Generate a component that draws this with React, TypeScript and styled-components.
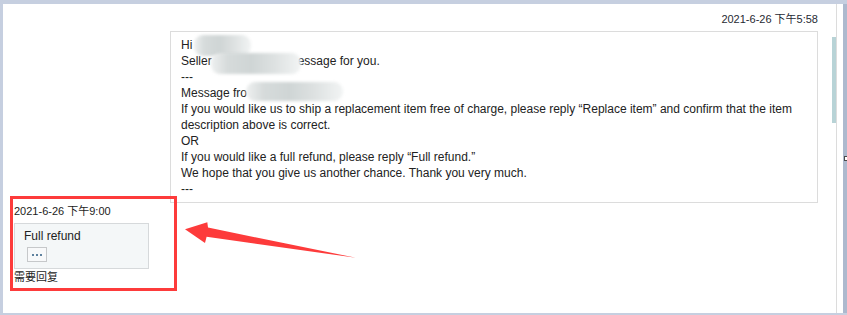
import styled, { createGlobalStyle } from "styled-components";

const GlobalStyle = createGlobalStyle`
  html, body {
    margin: 0;
    padding: 0;
    background: #c6cfe0;
  }
  body {
    font-family: "Liberation Sans", Arial, "Noto Sans CJK SC", sans-serif;
    color: #222;
  }
`;

const messageLines = [
  "---",
  "If you would like us to ship a replacement item free of charge, please reply \u201cReplace item\u201d and confirm that the item",
  "description above is correct.",
  "OR",
  "If you would like a full refund, please reply \u201cFull refund.\u201d",
  "We hope that you give us another chance. Thank you very much.",
  "---",
];

// blurred masks over personal info, in card coordinates
const blurs = [
  { left: 23, top: 3, width: 57, height: 21 },
  { left: 40, top: 21, width: 90, height: 21 },
  { left: 75, top: 50, width: 97, height: 19 },
];

export default function App() {
  return (
    <>
      <GlobalStyle />
      <Frame>
        <Panel>
          <Content>
            <SentTime>2021-6-26 下午5:58</SentTime>
            <MessageCard>
              <Line>Hi</Line>
              <Line>
                Seller<Gap $w={86} />essage for you.
              </Line>
              <Line>---</Line>
              <Line>Message fro</Line>
              {messageLines.slice(1).map((text, i) => (
                <Line key={i}>{text}</Line>
              ))}
              {blurs.map((b, i) => (
                <Blur
                  key={i}
                  style={{ left: b.left, top: b.top, width: b.width, height: b.height }}
                />
              ))}
            </MessageCard>
            <Reply>
              <ReplyTime>2021-6-26 下午9:00</ReplyTime>
              <ReplyBox>
                <ReplyText>Full refund</ReplyText>
                <MoreButton>
                  <Dot />
                  <Dot />
                  <Dot />
                </MoreButton>
              </ReplyBox>
              <NeedReply>需要回复</NeedReply>
              <RedFrame />
              <Arrow viewBox="183 219 176 42" width="176" height="42">
                <polygon
                  points="185,229.3 207.3,222.3 208,227.6 356,257.8 206.6,236.8 205,242.9"
                  fill="#fd3b3b"
                />
              </Arrow>
            </Reply>
          </Content>
          <ScrollTrack>
            <ScrollThumb />
          </ScrollTrack>
          <Divider />
          <Spacer />
        </Panel>
        <RightBand>
          <Handle />
        </RightBand>
      </Frame>
    </>
  );
}

const Frame = styled.div`
  display: flex;
  width: 847px;
  height: 315px;
  box-sizing: border-box;
  padding: 4px 0 2px 3px;
  background: #c6cfe0;
`;

const Panel = styled.div`
  display: flex;
  flex: 1;
  background: #fff;
`;

const Content = styled.div`
  flex: 1;
  display: flex;
  flex-direction: column;
  padding: 7px 14px 0 11px;
  font-size: 12px;
  line-height: 16px;
`;

const SentTime = styled.div`
  align-self: flex-end;
  font-size: 11px;
  line-height: 16px;
  color: #1f2a33;
`;

const MessageCard = styled.div`
  position: relative;
  margin: 4px 0 0 156px;
  padding: 5px 9px 5px 10px;
  border: 1px solid #dcdcdc;
  overflow: hidden;
`;

const Line = styled.div`
  white-space: nowrap;
  height: 16px;
`;

const Gap = styled.span<{ $w: number }>`
  display: inline-block;
  width: ${({ $w }) => $w}px;
`;

const Blur = styled.span`
  position: absolute;
  border-radius: 9px;
  background: linear-gradient(
    90deg,
    #eef0f0 0%,
    #d6dbdb 18%,
    #cfd5d5 45%,
    #dde1e1 70%,
    #f2f4f4 100%
  );
  filter: blur(1.5px);
`;

const Reply = styled.div`
  position: relative;
  width: 135px;
  margin-top: 0;
`;

const ReplyTime = styled.div`
  font-size: 11px;
  line-height: 16px;
  color: #1c1c1c;
`;

const ReplyBox = styled.div`
  display: flex;
  flex-direction: column;
  align-items: flex-start;
  margin-top: 4px;
  padding: 4px 9px 6px 9px;
  background: #f4f7f8;
  border: 1px solid #d6d9db;
`;

const ReplyText = styled.div`
  font-size: 12px;
  line-height: 16px;
  color: #222;
`;

const MoreButton = styled.div`
  display: flex;
  align-items: center;
  justify-content: center;
  gap: 2px;
  box-sizing: border-box;
  width: 20px;
  height: 15px;
  margin: 3px 0 0 3px;
  border: 1px solid #c6c8ca;
  background: #f8f9fa;
`;

const Dot = styled.span`
  width: 2px;
  height: 2px;
  border-radius: 1px;
  background: #2d5a80;
`;

const NeedReply = styled.div`
  font-size: 11px;
  line-height: 16px;
  color: #1c1c1c;
`;

const RedFrame = styled.div`
  position: absolute;
  left: -4px;
  top: -7px;
  width: 167px;
  height: 95px;
  box-sizing: border-box;
  border: 3px solid #fd3b3b;
`;

const Arrow = styled.svg`
  position: absolute;
  left: 169px;
  top: 16px;
`;

const ScrollTrack = styled.div`
  width: 4px;
  padding-top: 33px;
`;

const ScrollThumb = styled.div`
  height: 86px;
  background: #b8d3d6;
`;

const Divider = styled.div`
  width: 1px;
  background: #dcdcdc;
`;

const Spacer = styled.div`
  width: 6px;
`;

const RightBand = styled.div`
  display: flex;
  flex-direction: column;
  justify-content: center;
  width: 4px;
  background: #adb9ce;
`;

const Handle = styled.div`
  width: 4px;
  height: 5px;
  margin-left: 1px;
  box-sizing: border-box;
  border: 1px solid #4a4a4a;
  border-right: none;
  background: #fff;
`;
